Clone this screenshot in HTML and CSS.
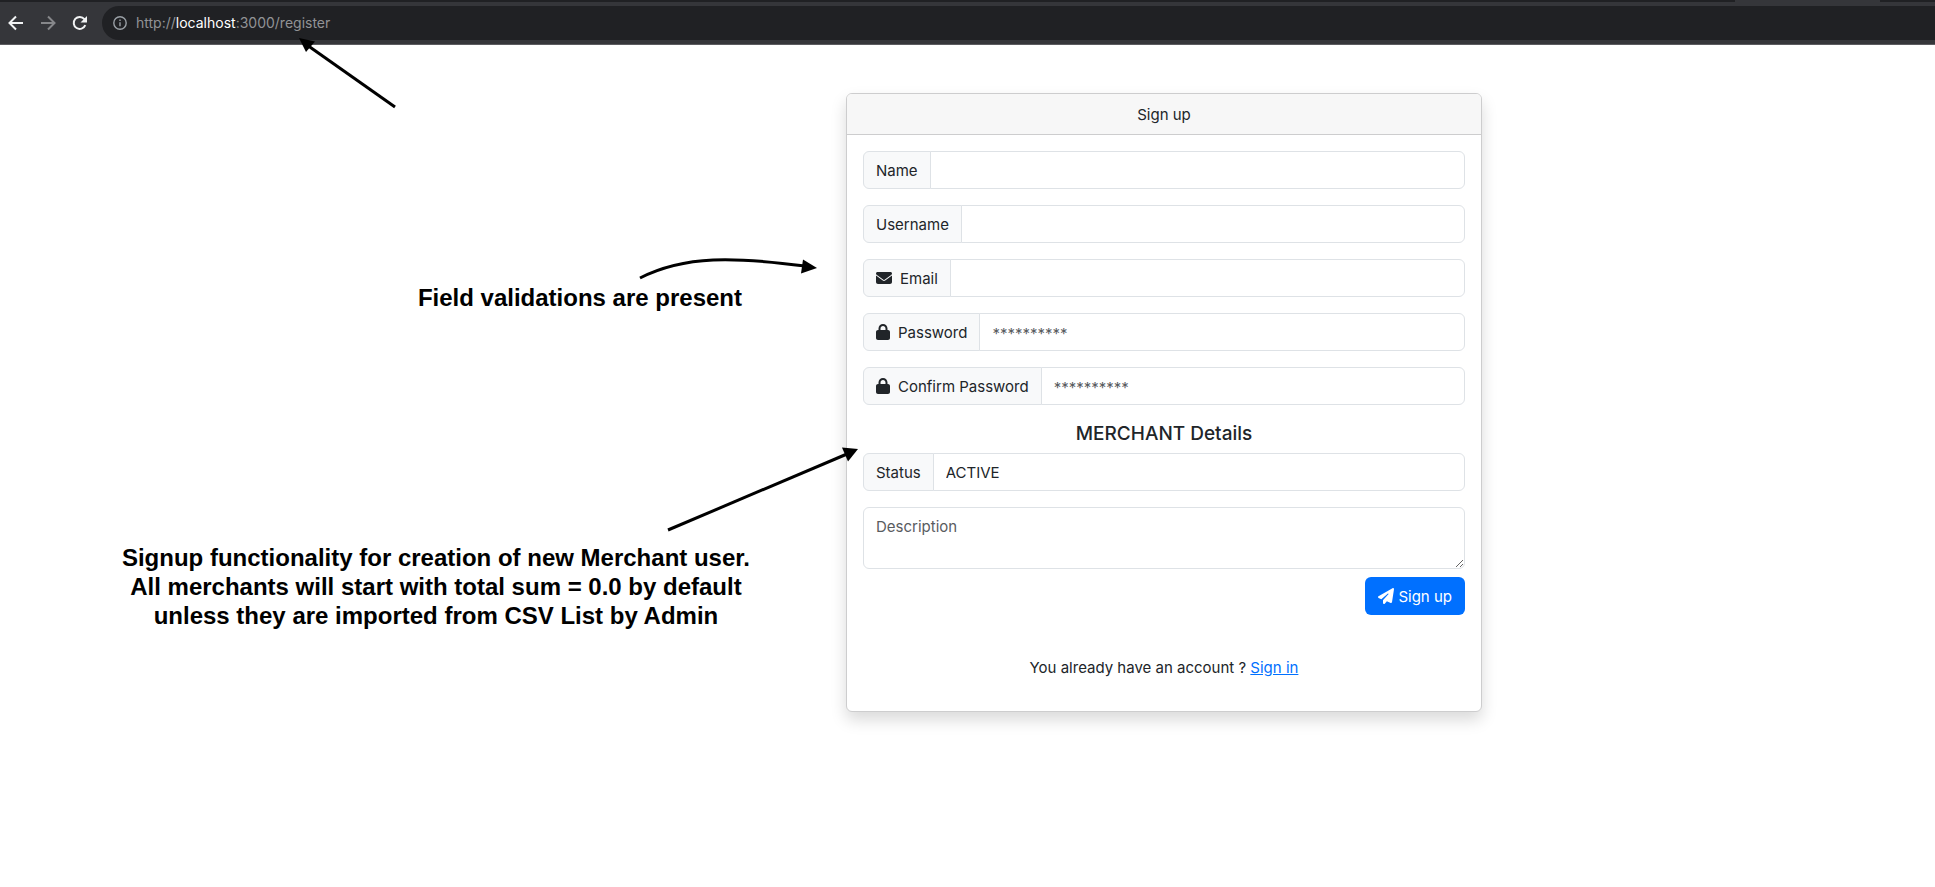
FILE: index.html
```html
<!DOCTYPE html>
<html lang="en">
<head>
<meta charset="utf-8">
<title>Sign up</title>
<meta name="viewport" content="width=device-width, initial-scale=1">
<link rel="stylesheet" href="styles.css">
</head>
<body>
<header class="browser">
  <div class="tabstrip"><span class="tab"></span></div>
  <div class="toolbar">
    <button class="nav" type="button" aria-label="Back"><svg viewBox="0 0 16 16"><path d="M15 8H2M8 1.500 1.500 8 8 14.500"/></svg></button>
    <button class="nav nav-off" type="button" aria-label="Forward"><svg viewBox="0 0 16 16"><path d="M1 8h13M8 1.500 14.500 8 8 14.500"/></svg></button>
    <button class="nav" type="button" aria-label="Reload"><svg viewBox="0 0 16 16"><path d="M13.300 10.200A6 6 0 1 1 12.400 4.100L14 5.800"/><path class="solid" d="M15 1v6.500H8.500z"/></svg></button>
    <div class="address">
      <svg class="info" viewBox="0 0 14 14"><circle cx="7" cy="7" r="6.200"/><path d="M7 6.200v4M7 3.500v1.500"/></svg>
      <span class="url">http://<b>localhost</b>:3000/register</span>
    </div>
  </div>
  <svg class="arrow arrow-url" width="110" height="80" viewBox="0 0 110 80"><path class="line" d="M105 74 17 12"/><path d="M9 5 25 8.500 16 19z"/></svg>
</header>
<main class="page">
  <aside class="notes">
    <p class="note note-fields">Field validations are present</p>
    <p class="note note-signup">Signup functionality for creation of new Merchant user.<br>All merchants will start with total sum = 0.0 by default<br>unless they are imported from CSV List by Admin</p>
    <svg class="arrow arrow-fields" width="190" height="40" viewBox="0 0 190 40"><path class="line" d="M5 27C50 4 100 6 170 15"/><path d="M182 17 168 8.500 166 22.500z"/></svg>
    <svg class="arrow arrow-signup" width="200" height="100" viewBox="0 0 200 100"><path class="line" d="M5 89 184 13"/><path d="M195 8 179 6.500 185 20.500z"/></svg>
  </aside>
  <form class="card">
    <h1 class="card-header">Sign up</h1>
    <div class="card-body">
      <div class="group"><label for="name"><span class="caption">Name</span></label><input id="name" type="text"></div>
      <div class="group"><label for="username"><span class="caption">Username</span></label><input id="username" type="text"></div>
      <div class="group"><label for="email"><svg class="icon" viewBox="0 0 512 512"><path d="M48 64C21.500 64 0 85.500 0 112c0 15.100 7.100 29.300 19.200 38.400L236.800 313.600c11.400 8.500 27 8.500 38.400 0L492.800 150.400c12.100-9.100 19.200-23.300 19.200-38.400c0-26.500-21.500-48-48-48H48zM0 176V384c0 35.300 28.700 64 64 64H448c35.300 0 64-28.700 64-64V176L294.400 339.200c-22.800 17.100-54 17.100-76.800 0L0 176z"/></svg><span class="caption">Email</span></label><input id="email" type="email"></div>
      <div class="group"><label for="password"><svg class="icon icon-lock" viewBox="0 0 448 512"><path d="M144 144v48H304V144c0-44.200-35.800-80-80-80s-80 35.800-80 80zM80 192V144C80 64.500 144.500 0 224 0s144 64.500 144 144v48h16c35.300 0 64 28.700 64 64V448c0 35.300-28.700 64-64 64H64c-35.300 0-64-28.700-64-64V256c0-35.300 28.700-64 64-64H80z"/></svg><span class="caption">Password</span></label><input id="password" type="password" placeholder="**********"></div>
      <div class="group"><label for="confirm"><svg class="icon icon-lock" viewBox="0 0 448 512"><path d="M144 144v48H304V144c0-44.200-35.800-80-80-80s-80 35.800-80 80zM80 192V144C80 64.500 144.500 0 224 0s144 64.500 144 144v48h16c35.300 0 64 28.700 64 64V448c0 35.300-28.700 64-64 64H64c-35.300 0-64-28.700-64-64V256c0-35.300 28.700-64 64-64H80z"/></svg><span class="caption">Confirm Password</span></label><input id="confirm" type="password" placeholder="**********"></div>
      <h2 class="section-title">MERCHANT Details</h2>
      <div class="group"><label for="status"><span class="caption">Status</span></label><select id="status"><option>ACTIVE</option><option>INACTIVE</option></select></div>
      <textarea class="description" rows="2" placeholder="Description" aria-label="Description"></textarea>
      <button class="submit" type="submit"><svg class="icon" viewBox="0 0 512 512"><path d="M498.100 5.600c10.100 7 15.400 19.100 13.500 31.200l-64 416c-1.500 9.700-7.400 18.200-16 23s-18.900 5.400-28 1.600L284 427.700l-68.500 74.100c-8.900 9.700-22.900 12.900-35.200 8.100S160 493.200 160 480V396.400c0-4 1.500-7.800 4.200-10.700L331.800 202.800c5.800-6.300 5.600-16-.4-22s-15.700-6.400-22-.7L106 360.800 17.700 316.600C7.100 311.300 .3 300.700 0 288.900s5.900-22.800 16.100-28.700l448-256c10.700-6.100 23.900-5.500 34 1.400z"/></svg><span class="caption">Sign up</span></button>
      <p class="signin">You already have an account ? <a href="#signin">Sign in</a></p>
    </div>
  </form>
</main>
</body>
</html>
```
FILE: styles.css
```css
*, *::before, *::after { box-sizing: border-box; }

body {
  margin: 0;
  background: #fff;
  color: #212529;
  font: 15px/24px Inter, "Liberation Sans", sans-serif;
}

h1, h2, p { margin: 0; }

.browser {
  position: relative;
  background: #35363a;
  border-bottom: 1px solid #5c5c60;
}

.tabstrip {
  display: flex;
  justify-content: flex-end;
  height: 2px;
  padding-right: 55px;
  background: #202124;
}

.tab { width: 145px; background: #35363a; }

.toolbar {
  display: flex;
  align-items: center;
  gap: 16px;
  padding: 4px 0 4px 8px;
}

.nav {
  width: 16px;
  height: 16px;
  padding: 0;
  border: 0;
  background: none;
  color: #f1f3f4;
}

.nav-off { color: #86878a; }

.nav svg {
  display: block;
  fill: none;
  stroke: currentColor;
  stroke-width: 2;
}

.nav .solid { fill: currentColor; stroke: none; }

.address {
  display: flex;
  flex: 1;
  align-items: center;
  gap: 9px;
  height: 34px;
  margin-left: -2px;
  padding-left: 11px;
  border-radius: 17px 0 0 17px;
  background: #202124;
  color: #9aa0a6;
}

.info {
  width: 14px;
  height: 14px;
  fill: none;
  stroke: currentColor;
  stroke-width: 1.4;
}

.url { color: #929396; font-size: 14px; }
.url b { color: #fff; font-weight: 400; }

.page {
  display: grid;
  grid-template-columns: 846fr 636fr 453fr;
  align-items: start;
  padding-bottom: 48px;
}

.notes {
  position: relative;
  display: flex;
  flex-direction: column;
  align-items: flex-end;
  gap: 231px;
  padding: 238px 96px 0 0;
}

.note {
  color: #000;
  font: bold 24px/29px "Liberation Sans", Arial, sans-serif;
  text-align: center;
}

.note-fields { padding-right: 8px; }

.arrow {
  position: absolute;
  z-index: 1;
  overflow: visible;
  pointer-events: none;
}

.arrow .line { fill: none; stroke: #000; stroke-width: 3; }
.arrow-url { left: 290px; top: 33px; }
.arrow-fields { right: 21px; top: 206px; }
.arrow-signup { right: -17px; top: 396px; }

.card {
  margin-top: 48px;
  border: 1px solid #cdcdce;
  border-radius: 6px;
  background: #fff;
  box-shadow: 0 8px 16px rgba(0, 0, 0, .15);
}

.card-header {
  padding: 9px 16px 7px;
  border-bottom: 1px solid #cdcdce;
  border-radius: 5px 5px 0 0;
  background: #f7f7f7;
  font-size: 15px;
  font-weight: 400;
  text-align: center;
}

.card-body {
  display: flex;
  flex-direction: column;
  padding: 16px 16px 31px;
}

.group { display: flex; margin-bottom: 16px; }

.group label {
  display: flex;
  align-items: center;
  gap: 8px;
  padding: 0 12px;
  border: 1px solid #dee2e6;
  border-radius: 6px 0 0 6px;
  background: #f8f9fa;
}

.caption { padding-top: 2px; }

.group input, .group select, .description {
  border: 1px solid #dee2e6;
  background: #fff;
  color: #212529;
  font: inherit;
  padding: 7px 12px 5px;
}

.group input, .group select {
  flex: 1;
  min-width: 0;
  height: 38px;
  margin-left: -1px;
  border-radius: 0 6px 6px 0;
  appearance: none;
}

::placeholder { color: #595c5f; opacity: 1; }

.icon { width: 16px; height: 16px; fill: currentColor; }
.icon-lock { width: 14px; }

.section-title {
  padding-top: 1px;
  margin-bottom: 7px;
  font-size: 19px;
  font-weight: 500;
  line-height: 24px;
  text-align: center;
}

.description {
  display: block;
  height: 62px;
  margin-bottom: 8px;
  border-radius: 6px;
  resize: vertical;
}

.submit {
  display: flex;
  align-items: center;
  align-self: flex-end;
  gap: 4px;
  height: 38px;
  margin-bottom: 41px;
  padding: 0 13px;
  border: 0;
  border-radius: 6px;
  background: #0070ff;
  color: #fff;
  font: inherit;
}

.signin { text-align: center; }
.signin a { color: #0070ff; }
```
